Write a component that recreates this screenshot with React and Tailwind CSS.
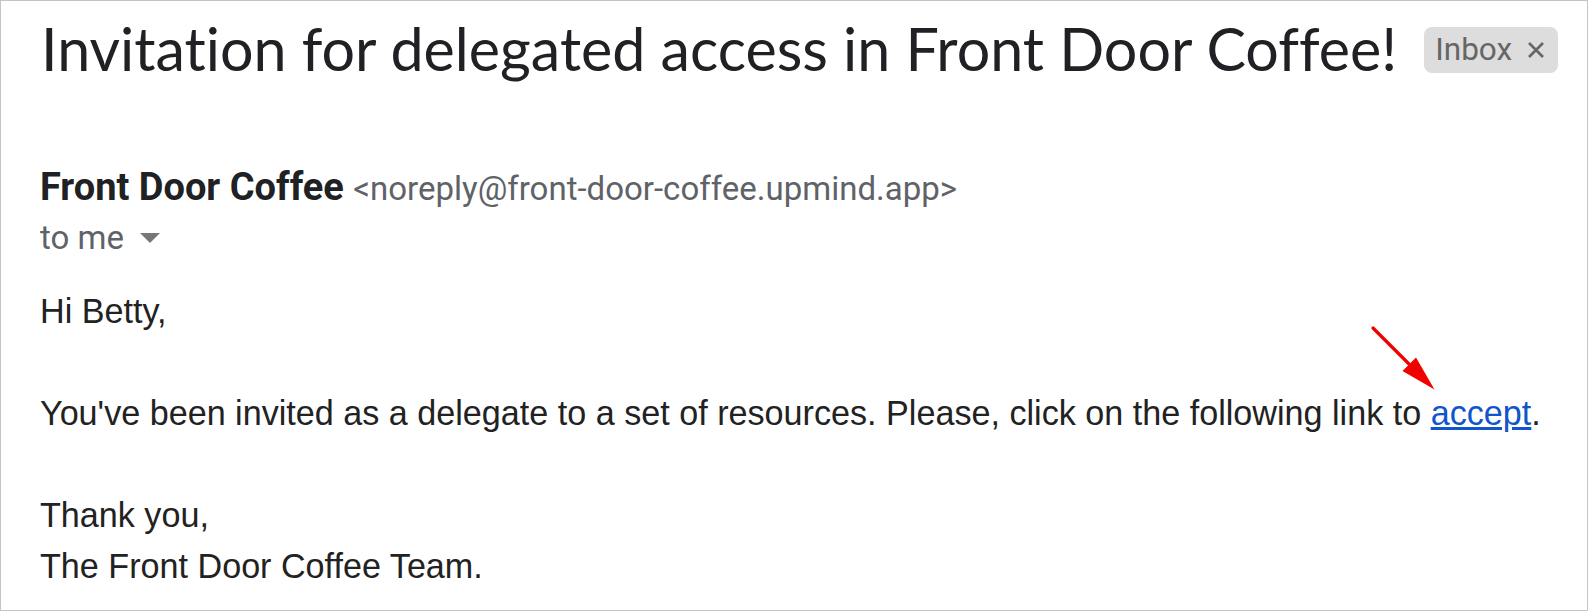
import React from 'react';

function Arrow() {
    return (
        <svg className="absolute left-[1360px] top-[315px]" width="84" height="84" viewBox="0 0 84 84">
            <line x1="12" y1="12" x2="60" y2="60" stroke="#f20000" strokeWidth="3.2" strokeLinecap="round" />
            <polygon points="73.5,73.5 41.5,55 55,41.5" fill="#f20000" />
        </svg>
    );
}

export default function App() {
    return (
        <div className="relative w-[1588px] h-[611px] bg-white border border-[#c4c4c4] overflow-hidden">
            {/* subject + label */}
            <div className="flex items-start pl-[39px] pt-[12px]">
                <h1 className="ml-[1px] text-[59.2px] leading-[72px] text-[#202124] font-normal whitespace-nowrap [font-variant-ligatures:none]" style={{ fontFamily: 'Lato, sans-serif' }}>
                    Invitation for delegated access in Front Door Coffee!
                </h1>
                <span className="ml-[27px] mt-[14px] h-[46px] pl-[11px] pr-[13px] flex items-center rounded-[8px] bg-[#dddddd] text-[#666666] text-[31.5px]" style={{ fontFamily: 'Roboto, sans-serif' }}>
                    Inbox
                    <svg className="ml-[15px]" width="18" height="18" viewBox="0 0 18 18">
                        <path d="M2 2 L16 16 M16 2 L2 16" stroke="#666666" strokeWidth="2.6" />
                    </svg>
                </span>
            </div>

            {/* sender */}
            <div className="pl-[39px] mt-[78px]" style={{ fontFamily: 'Roboto, sans-serif' }}>
                <div className="text-[38px] leading-[48px] whitespace-nowrap">
                    <span className="font-bold text-[#202124]">Front Door Coffee</span>{' '}
                    <span className="text-[#5f6368] text-[33px] leading-[33px]">&lt;noreply@front-door-coffee.upmind.app&gt;</span>
                </div>
                <div className="flex items-center text-[33px] leading-[54px] text-[#5f6368]">
                    to me
                    <svg className="ml-[16px]" width="20" height="10" viewBox="0 0 20 10">
                        <polygon points="0,0 20,0 10,10" fill="#777777" />
                    </svg>
                </div>
            </div>

            {/* body */}
            <div className="pl-[39px] mt-[21px] text-[34.15px] leading-[51px] text-[#222222]" style={{ fontFamily: '"Liberation Sans", Arial, sans-serif' }}>
                <p>Hi Betty,</p>
                <br />
                <p className="whitespace-nowrap">
                    You've been invited as a delegate to a set of resources. Please, click on the following link to{' '}
                    <a href="#" className="text-[#1155cc] underline">accept</a>.
                </p>
                <br />
                <p>Thank you,</p>
                <p>The Front Door Coffee Team.</p>
            </div>

            <Arrow />
        </div>
    );
}
